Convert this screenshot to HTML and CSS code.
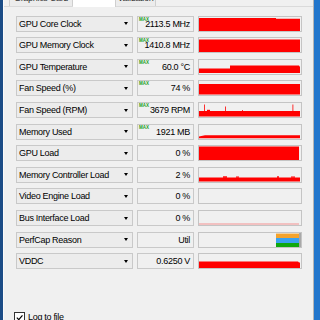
FILE: index.html
```html
<!DOCTYPE html>
<html lang="en">
<head>
  <meta charset="UTF-8">
  <meta name="viewport" content="width=device-width, initial-scale=1.0">
  <title>GPU-Z Sensors</title>
  <link rel="stylesheet" href="styles.css">
</head>
<body>
<div class="desk">
  <div class="edge-left"></div>
  <div class="window">
    <div class="tabs">
      <div class="tab tab-card"><span class="tab-label">Graphics Card</span></div>
      <div class="tab tab-sensors active"><span class="tab-label">Sensors</span></div>
      <div class="tab tab-valid"><span class="tab-label">Validation</span></div>
    </div>

    <div class="sensors">
      <div class="row">
        <div class="combo">GPU Core Clock<span class="arrow"></span></div>
        <div class="value"><span class="max">MAX</span>2113.5 MHz</div>
        <div class="graph"><svg viewBox="0 0 102 14" preserveAspectRatio="none"><polygon points="0,1 77,1 77,1.7 101,1.7 101,14 0,14"/></svg></div>
      </div>
      <div class="row">
        <div class="combo">GPU Memory Clock<span class="arrow"></span></div>
        <div class="value"><span class="max">MAX</span>1410.8 MHz</div>
        <div class="graph"><svg viewBox="0 0 102 14" preserveAspectRatio="none"><polygon points="0,1.5 101,1.5 101,14 0,14"/></svg></div>
      </div>
      <div class="row">
        <div class="combo">GPU Temperature<span class="arrow"></span></div>
        <div class="value"><span class="max">MAX</span>60.0 °C</div>
        <div class="graph"><svg viewBox="0 0 102 14" preserveAspectRatio="none"><polygon points="0,8.5 31,8.5 31,5.5 100,5.5 101,7 101,13 0,13"/></svg></div>
      </div>
      <div class="row">
        <div class="combo">Fan Speed (%)<span class="arrow"></span></div>
        <div class="value"><span class="max">MAX</span>74 %</div>
        <div class="graph"><svg viewBox="0 0 102 14" preserveAspectRatio="none"><polygon points="0,3 101,3 101,13.5 0,13.5"/></svg></div>
      </div>
      <div class="row">
        <div class="combo">Fan Speed (RPM)<span class="arrow"></span></div>
        <div class="value"><span class="max">MAX</span>3679 RPM</div>
        <div class="graph"><svg viewBox="0 0 102 14" preserveAspectRatio="none">
          <polygon points="0,8 101,8 101,13.5 0,13.5"/>
          <rect x="5" y="1.5" width="0.8" height="7"/>
          <rect x="8" y="6.8" width="3" height="1.5"/>
          <rect x="26" y="3.5" width="0.8" height="5"/>
          <rect x="43" y="7" width="0.8" height="1.5"/>
          <rect x="93.5" y="1.5" width="0.8" height="7"/>
        </svg></div>
      </div>
      <div class="row">
        <div class="combo">Memory Used<span class="arrow"></span></div>
        <div class="value"><span class="max">MAX</span>1921 MB</div>
        <div class="graph"><svg viewBox="0 0 102 14" preserveAspectRatio="none"><polygon points="0,11.5 6,10.3 101,10.3 101,13.3 0,13.3"/></svg></div>
      </div>
      <div class="row">
        <div class="combo">GPU Load<span class="arrow"></span></div>
        <div class="value">0 %</div>
        <div class="graph"><svg viewBox="0 0 102 14" preserveAspectRatio="none"><polygon points="0,0.5 100,0.5 100,14 0,14"/></svg></div>
      </div>
      <div class="row">
        <div class="combo">Memory Controller Load<span class="arrow"></span></div>
        <div class="value">2 %</div>
        <div class="graph"><svg viewBox="0 0 102 14" preserveAspectRatio="none">
          <polygon points="0,9.5 101,9.5 101,13.5 0,13.5"/>
          <rect x="24" y="8.3" width="4" height="1.5"/>
          <rect x="37" y="8.5" width="3" height="1.2"/>
          <rect x="78" y="8.3" width="2" height="1.5"/>
          <rect x="92" y="8.5" width="4" height="1.2"/>
        </svg></div>
      </div>
      <div class="row">
        <div class="combo">Video Engine Load<span class="arrow"></span></div>
        <div class="value">0 %</div>
        <div class="graph"></div>
      </div>
      <div class="row">
        <div class="combo">Bus Interface Load<span class="arrow"></span></div>
        <div class="value">0 %</div>
        <div class="graph"><svg viewBox="0 0 102 14" preserveAspectRatio="none"><rect class="faint" x="0" y="12.6" width="100" height="0.8"/></svg></div>
      </div>
      <div class="row">
        <div class="combo">PerfCap Reason<span class="arrow"></span></div>
        <div class="value">Util</div>
        <div class="graph"><svg viewBox="0 0 102 14" preserveAspectRatio="none">
          <rect class="cap-util" x="77" y="0.6" width="23" height="4.4"/>
          <rect class="cap-vrel" x="77" y="5" width="23" height="5"/>
          <rect class="cap-idle" x="77" y="10" width="23" height="4"/>
          <rect class="cap-edge" x="100" y="0" width="2" height="14"/>
        </svg></div>
      </div>
      <div class="row">
        <div class="combo">VDDC<span class="arrow"></span></div>
        <div class="value">0.6250 V</div>
        <div class="graph"><svg viewBox="0 0 102 14" preserveAspectRatio="none"><polygon points="0,7.5 99,7.5 100,8.5 101,8.5 101,14 0,14"/></svg></div>
      </div>
    </div>

    <label class="logbar">
      <span class="check"><svg viewBox="0 0 10 10"><path d="M2 5.2 L4.2 7.4 L8.3 2.6"/></svg></span>
      Log to file
    </label>
  </div>
  <div class="edge-right"></div>
</div>
</body>
</html>
```

FILE: styles.css
```css
body {
  margin: 0;
  font-family: "Liberation Sans", Arial, sans-serif;
  font-size: 9px;
  letter-spacing: -0.3px;
  color: #000;
}
.desk {
  display: flex;
  width: 320px;
  height: 320px;
  overflow: hidden;
}
.edge-left {
  width: 3px;
  background: #1b4c86;
}
.edge-right {
  width: 6px;
  background: #2276cc;
}
.window {
  flex: 1;
  background: #f0f0f0;
  border-left: 1px solid #fafafa;
  border-right: 1px solid #b4b4b4;
}

/* tabs, cut off at the top of the shot */
.tabs {
  display: flex;
  height: 6px;
  padding-left: 5px;
  border-bottom: 1px solid #dadada;
}
.tab {
  height: 6px;
  overflow: hidden;
  text-align: center;
  background: #ececec;
  border-right: 1px solid #cfcfcf;
  color: #333;
}
.tab-label {
  display: block;
  line-height: 9px;
  margin-top: -6px;
}
.tab.active {
  background: #fff;
  height: 7px;
  margin-bottom: -1px;
}
.tab.active .tab-label {
  margin-top: -14px;
}
.tab-card { width: 62px; border-left: 1px solid #cfcfcf; }
.tab-sensors { width: 42px; }
.tab-valid { width: 39px; }

/* sensor rows */
.sensors {
  display: flex;
  flex-direction: column;
  gap: 5.6px;
  padding: 8.7px 0 0 12px;
}
.row {
  display: grid;
  grid-template-columns: 117px 57px 104px;
  column-gap: 4px;
  height: 16px;
}
.combo,
.value,
.graph {
  box-sizing: border-box;
  height: 16px;
  border: 1px solid #c9c9c9;
  position: relative;
}
.combo {
  background: #ececec;
  padding-left: 2px;
  line-height: 14px;
  white-space: nowrap;
}
.arrow {
  position: absolute;
  right: 4px;
  top: 5.5px;
  border-left: 2.5px solid transparent;
  border-right: 2.5px solid transparent;
  border-top: 3px solid #000;
}
.value {
  background: #f0f0f0;
  text-align: right;
  padding-right: 3px;
  line-height: 14px;
  white-space: nowrap;
}
.max {
  position: absolute;
  left: 1px;
  top: 1px;
  font-size: 4.5px;
  line-height: 4px;
  font-weight: bold;
  letter-spacing: 0;
  color: #1a9e1a;
}
.graph {
  background: #f0f0f0;
  border-color: #c4c4c4;
}
.graph svg {
  display: block;
  width: 100%;
  height: 100%;
  fill: #ff0000;
}
.graph .faint { fill: #f47a7a; }
.graph .cap-util { fill: #f5a32c; }
.graph .cap-vrel { fill: #3aa2f0; }
.graph .cap-idle { fill: #0fa80f; }
.graph .cap-edge { fill: #a8a8a8; }

/* log checkbox */
.logbar {
  display: flex;
  align-items: center;
  gap: 3px;
  margin-top: 42.7px;
  padding-left: 10px;
  line-height: 11px;
}
.check {
  box-sizing: border-box;
  width: 11px;
  height: 11px;
  border: 1px solid #333;
  background: #fff;
}
.check svg {
  display: block;
  width: 9px;
  height: 9px;
  fill: none;
  stroke: #000;
  stroke-width: 1.3;
}
```
